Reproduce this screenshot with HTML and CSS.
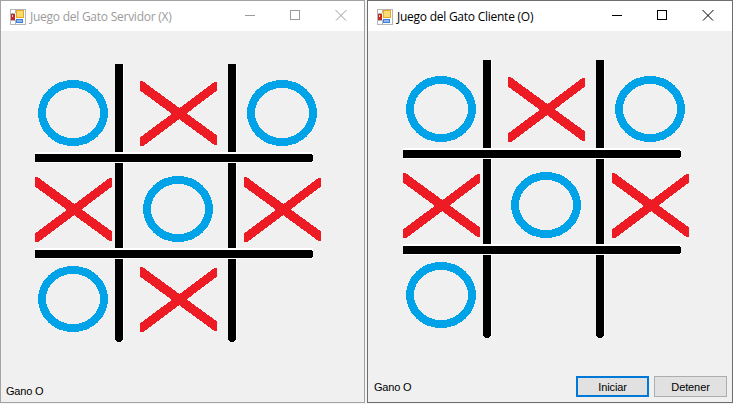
FILE: index.html
```html
<!DOCTYPE html>
<html>
<head>
    <title>Juego del Gato</title>
    <link rel="stylesheet" href="styles.css">
</head>

<body>
    <div class="window server">
        <div class="titlebar">
            <svg class="app-icon" width="16" height="16" viewBox="0 0 16 16"><use href="#appicon"/></svg>
            <span class="title">Juego del Gato Servidor (X)</span>
            <div class="caption-btn caption-min"><svg width="10" height="10" viewBox="0 0 10 10"><use href="#cap-min"/></svg></div>
            <div class="caption-btn"><svg width="10" height="10" viewBox="0 0 10 10"><use href="#cap-max"/></svg></div>
            <div class="caption-btn"><svg width="12" height="12" viewBox="0 0 12 12"><use href="#cap-close"/></svg></div>
        </div>
        <div class="client">
            <svg class="board" width="290" height="280" viewBox="35 64 290 280" shape-rendering="crispEdges">
                <defs>
                    <g id="appicon" shape-rendering="crispEdges">
                        <rect x="0" y="0" width="15" height="15" fill="#fff"/>
                        <path d="M0 0h15v15h-15z M0 4h5 M5 0v4 M0 11h5 M5 11v4" fill="none" stroke="#b5b5b5"/>
                        <rect x="1" y="5" width="4" height="6" fill="#c8281e"/>
                        <rect x="2" y="6" width="1" height="2" fill="#f3d0c8"/>
                        <rect x="6" y="1" width="8" height="8" fill="#e8a818"/>
                        <rect x="7" y="2" width="6" height="6" fill="#fbdc74"/>
                        <rect x="6" y="10" width="7" height="4" fill="#3f7fd8"/>
                        <rect x="7" y="11" width="5" height="2" fill="#8db8ee"/>
                    </g>
                    <path id="cap-min" d="M0 5.5h10" fill="none" stroke="currentColor" shape-rendering="crispEdges"/>
                    <rect id="cap-max" x="0.5" y="0.5" width="9" height="9" fill="none" stroke="currentColor" shape-rendering="crispEdges"/>
                    <path id="cap-close" d="M0.5 1L11 11.5M11.5 1L1 11.5" fill="none" stroke="currentColor"/>

                    <ellipse id="o" cx="35" cy="33" rx="31" ry="29" fill="none" stroke="#00a2e8" stroke-width="8"/>
                    <g id="x" fill="#ed1c24">
                        <polygon points="0,0 2.5,0 77,54.5 77,64 74.5,64 0,9.5"/>
                        <polygon points="74.5,1 77,1 77,9.5 3.5,65 0,65 0,56.5"/>
                    </g>
                    <g id="grid">
                        <rect x="123" y="64" width="1" height="278" fill="#fff"/>
                        <rect x="236" y="64" width="1" height="278" fill="#fff"/>
                        <polygon points="115,64 123,64 123,339 121,342 117,342 115,339"/>
                        <polygon points="228,64 236,64 236,339 234,342 230,342 228,339"/>
                        <rect x="35" y="152" width="278" height="11" fill="#fff"/>
                        <rect x="35" y="248" width="278" height="11" fill="#fff"/>
                        <polygon points="35,154 311,154 313,156 313,160 311,162 35,162"/>
                        <polygon points="35,250 311,250 313,252 313,256 311,258 35,258"/>
                    </g>
                </defs>
                <use href="#grid"/>
                <use href="#o" x="38" y="80"/>
                <use href="#x" x="140" y="81"/>
                <use href="#o" x="247" y="80"/>
                <use href="#x" x="35" y="177"/>
                <use href="#o" x="143" y="176"/>
                <use href="#x" x="244" y="177"/>
                <use href="#o" x="38" y="266"/>
                <use href="#x" x="140" y="267"/>
            </svg>
            <div class="footer">
                <span class="status">Gano O</span>
            </div>
        </div>
    </div>

    <div class="window cliente">
        <div class="titlebar">
            <svg class="app-icon" width="16" height="16" viewBox="0 0 16 16"><use href="#appicon"/></svg>
            <span class="title">Juego del Gato Cliente (O)</span>
            <div class="caption-btn caption-min"><svg width="10" height="10" viewBox="0 0 10 10"><use href="#cap-min"/></svg></div>
            <div class="caption-btn"><svg width="10" height="10" viewBox="0 0 10 10"><use href="#cap-max"/></svg></div>
            <div class="caption-btn"><svg width="12" height="12" viewBox="0 0 12 12"><use href="#cap-close"/></svg></div>
        </div>
        <div class="client">
            <svg class="board" width="290" height="280" viewBox="35 64 290 280" shape-rendering="crispEdges">
                <use href="#grid"/>
                <use href="#o" x="38" y="80"/>
                <use href="#x" x="140" y="81"/>
                <use href="#o" x="247" y="80"/>
                <use href="#x" x="35" y="177"/>
                <use href="#o" x="143" y="176"/>
                <use href="#x" x="244" y="177"/>
                <use href="#o" x="38" y="266"/>
            </svg>
            <div class="footer">
                <span class="status">Gano O</span>
                <button class="btn btn-default">Iniciar</button>
                <button class="btn">Detener</button>
            </div>
        </div>
    </div>
</body>

</html>
```

FILE: styles.css
```css
body {
    margin: 0;
    width: 733px;
    height: 404px;
    display: flex;
    gap: 2px;
    background-color: #f4f4f4;
    font-family: "Liberation Sans", Arial, sans-serif;
    overflow: hidden;
}
.window {
    box-sizing: border-box;
    height: 403px;
    display: flex;
    flex-direction: column;
    border: 1px solid #a3a3a3;
    background-color: #f0f0f0;
}
.server {
    width: 365px;
}
.cliente {
    width: 366px;
    border-color: #6e6e6e;
}
.titlebar {
    height: 30px;
    display: flex;
    align-items: center;
    flex-shrink: 0;
    background-color: #fff;
    color: #000;
}
.server .titlebar {
    color: #9b9b9b;
}
.cliente .titlebar {
    padding-right: 1px;
}
.app-icon {
    margin-left: 9px;
    margin-top: 1px;
}
.title {
    flex: 1;
    margin-left: 4px;
    font-family: "Open Sans", "Noto Sans", sans-serif;
    font-size: 12px;
    letter-spacing: -0.25px;
    white-space: nowrap;
}
.caption-btn {
    box-sizing: border-box;
    width: 46px;
    height: 30px;
    padding-bottom: 2px;
    display: flex;
    align-items: center;
    justify-content: center;
}
.caption-min {
    padding-left: 2px;
}
.client {
    flex: 1;
    display: flex;
    flex-direction: column;
}
.board {
    display: block;
}
.server .board {
    margin: 33px 0 0 34px;
}
.cliente .board {
    margin: 29px 0 0 35px;
}
.footer {
    margin-top: auto;
    display: flex;
    align-items: center;
    height: 21px;
    font-size: 11px;
    letter-spacing: -0.2px;
    color: #000;
}
.server .footer {
    padding: 0 0 1px 5px;
}
.cliente .footer {
    padding: 0 5px 5px 6px;
}
.status {
    flex: 1;
}
.btn {
    box-sizing: border-box;
    width: 73px;
    height: 21px;
    padding: 0;
    margin-left: 5px;
    border: 1px solid #adadad;
    background-color: #e1e1e1;
    font-family: "Liberation Sans", Arial, sans-serif;
    font-size: 11px;
    letter-spacing: -0.1px;
    color: #000;
}
.btn-default {
    border: 2px solid #0078d7;
}
```
